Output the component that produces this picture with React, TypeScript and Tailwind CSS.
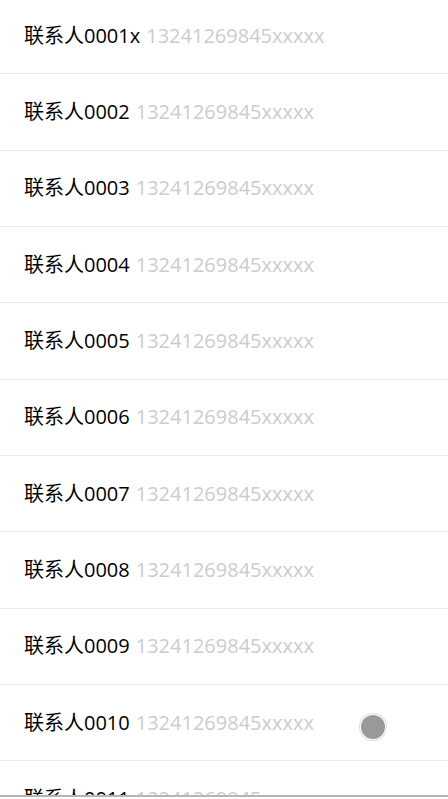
import React from "react";

const rows = Array.from({ length: 12 }, (_, i) => ({
  name: "联系人" + String(i + 1).padStart(4, "0") + (i === 0 ? "x" : ""),
  phone: "13241269845xxxxx",
}));

export default function App() {
  return (
    <div
      className="relative h-[799px] w-[448px] bg-white overflow-hidden"
      style={{ fontFamily: '"Open Sans", "Noto Sans CJK SC", sans-serif' }}
    >
      <div className="h-[797px] overflow-hidden border-b-2 border-[#b5b5b5]">
        <div className="-mt-[2px]">
          {rows.map((r) => (
            <div
              key={r.name}
              className="h-[76.33px] flex items-center pl-[24px] border-b border-[#e8e8e8] text-[20px] whitespace-nowrap"
            >
              <span className="text-black">{r.name}</span>
              <span className="ml-[6px] text-[#cccccc]">{r.phone}</span>
            </div>
          ))}
        </div>
      </div>

      {/* floating dot */}
      <div className="absolute left-[361px] top-[715px] w-[24px] h-[24px] rounded-full bg-[#999999] ring-1 ring-[#dcdcdc] ring-offset-1"></div>
    </div>
  );
}
